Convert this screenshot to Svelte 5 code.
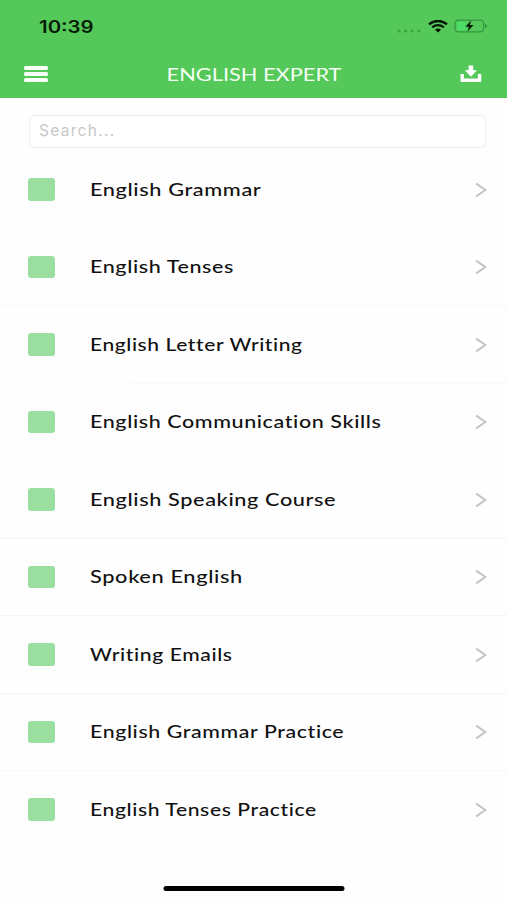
<script>
  const topics = [
    { title: 'English Grammar', stretch: 1.207, line: 'none' },
    { title: 'English Tenses', stretch: 1.195, line: 'soft' },
    { title: 'English Letter Writing', stretch: 1.167, line: 'inset' },
    { title: 'English Communication Skills', stretch: 1.194, line: 'none' },
    { title: 'English Speaking Course', stretch: 1.206, line: 'full' },
    { title: 'Spoken English', stretch: 1.212, line: 'full' },
    { title: 'Writing Emails', stretch: 1.175, line: 'full' },
    { title: 'English Grammar Practice', stretch: 1.186, line: 'soft' },
    { title: 'English Tenses Practice', stretch: 1.174, line: 'none' }
  ];

  let query = $state('');
  let visible = $derived(topics.filter((t) => t.title.toLowerCase().includes(query.toLowerCase())));
</script>

<div class="screen">
  <header>
    <div class="status">
      <span class="time">10:39</span>
      <div class="indicators">
        <svg class="dots" width="24" height="4" viewBox="0 0 24 4">
          <circle cx="2" cy="2" r="1.6" /><circle cx="8.6" cy="2" r="1.6" />
          <circle cx="15.2" cy="2" r="1.6" /><circle cx="21.8" cy="2" r="1.6" />
        </svg>
        <svg class="wifi" width="20" height="13" viewBox="0 0 20 13">
          <path d="M1 4.3Q10-2.4 19 4.3" stroke-width="2.4" />
          <path d="M4.2 7.3Q10 2.9 15.8 7.3" stroke-width="2.2" />
          <path d="M7 9.8Q10 7.4 13 9.8L10 12.6Z" class="solid" />
        </svg>
        <svg class="battery" width="34" height="14" viewBox="0 0 34 14">
          <rect x="1" y="1.2" width="28.6" height="11.6" rx="3.2" fill="none" stroke="#359640" stroke-width="1.2" />
          <rect x="2.8" y="2.8" width="10.5" height="8.4" rx="1.8" fill="#4bdc68" />
          <path d="M31 4.8Q33 5.4 33 7Q33 8.6 31 9.2Z" fill="#359640" />
          <path d="M17.2 1.4L11.2 7.8H14.8L13.6 12.6L19.6 6.1H16Z" fill="#06210a" />
        </svg>
      </div>
    </div>
    <nav>
      <button class="menu" aria-label="Menu">
        <span></span><span></span><span></span>
      </button>
      <h1>ENGLISH EXPERT</h1>
      <button class="download" aria-label="Download">
        <svg width="22" height="18" viewBox="0 0 22 18">
          <path d="M8.6 0.4H13.2V5.2H17L10.9 11.8L4.8 5.2H8.6Z" />
          <path d="M0.5 9H3.9V13.4H17.9V9H21.3V15.8Q21.3 17 20.1 17H1.7Q0.5 17 0.5 15.8Z" />
        </svg>
      </button>
    </nav>
  </header>

  <div class="search">
    <input type="text" placeholder="Search..." aria-label="Search" bind:value={query} />
  </div>

  <ul>
    {#each visible as topic}
      <li class={topic.line}>
        <span class="thumb"></span>
        <span class="title">
          <span class="label" style:transform="scaleX({topic.stretch})">{topic.title}</span>
        </span>
        <svg class="chevron" width="12" height="16" viewBox="0 0 12 16">
          <path d="M1.2 1.6L10.4 8L1.2 14.4" />
        </svg>
      </li>
    {/each}
  </ul>

  <div class="home-bar"></div>
</div>

<style>
  :global(body) {
    margin: 0;
    background: #fefefe;
  }

  .screen {
    box-sizing: border-box;
    width: 507px;
    height: 900px;
    display: flex;
    flex-direction: column;
    overflow: hidden;
    background: #fefefe;
    font-family: Lato, 'Liberation Sans', sans-serif;
    color: #111;
  }

  header {
    box-sizing: border-box;
    height: 98.4px;
    flex: none;
    background: #54c858;
  }

  .status {
    height: 50px;
    box-sizing: border-box;
    padding: 3px 19px 0 39px;
    display: flex;
    align-items: center;
    justify-content: space-between;
  }

  .time {
    font: 600 17px/20px Inter, sans-serif;
    color: #071c08;
    transform: scaleX(1.2);
    transform-origin: left;
  }

  .indicators {
    display: flex;
    align-items: center;
  }

  .dots { fill: #3da444; margin: 8px 7px 0 0; }
  .wifi { fill: none; stroke: #041506; margin: 0 6px 1px 0; }
  .wifi .solid { fill: #041506; stroke: none; }
  .battery { margin-bottom: 1px; }

  nav {
    height: 48px;
    padding: 0 25px 0 24px;
    display: grid;
    grid-template-columns: 24px 1fr 22px;
    align-items: center;
  }

  button {
    border: 0;
    padding: 0;
    background: none;
    cursor: pointer;
  }

  .menu {
    display: flex;
    flex-direction: column;
    gap: 2.8px;
  }

  .menu span {
    width: 24px;
    height: 3.4px;
    border-radius: 1.5px;
    background: #f8fff8;
  }

  h1 {
    margin: 0;
    font-size: 18px;
    line-height: 24px;
    font-weight: 400;
    text-align: center;
    color: #f4fff4;
    transform: scaleX(1.21);
  }

  .download svg {
    display: block;
    fill: #fff;
  }

  .search {
    padding: 16.4px 21px 0 29px;
    height: 36.5px;
    flex: none;
  }

  input {
    box-sizing: border-box;
    width: 100%;
    height: 33px;
    border: 1.5px solid #efefef;
    border-radius: 5px;
    padding: 0 9px 1px;
    background: #fff;
    font: 400 15.5px Inter, sans-serif;
    letter-spacing: 1.3px;
    outline: none;
  }

  input::placeholder { color: #c8c8c8; opacity: 1; }

  ul {
    list-style: none;
    margin: 0;
    padding: 0;
    flex: 1;
  }

  li {
    box-sizing: border-box;
    height: 77.5px;
    padding: 0 20px 0 28px;
    display: flex;
    align-items: center;
    border-bottom: 1px solid transparent;
  }

  li.full { border-bottom-color: #f4f4f4; }
  li.soft { border-bottom-color: #f9f9f9; }
  li.inset {
    border-image: linear-gradient(90deg, transparent 25%, #f9f9f9 26%) 1;
    border-width: 0 0 1px;
  }

  .thumb {
    width: 27px;
    height: 22.5px;
    border-radius: 3px;
    background: #9adf9f;
  }

  .title {
    flex: 1;
    margin: 0 0 1px 35px;
    line-height: 20px;
  }

  .label {
    display: inline-block;
    font-size: 18px;
    font-weight: 500;
    letter-spacing: 0.5px;
    white-space: nowrap;
    transform-origin: left;
  }

  .chevron {
    fill: none;
    stroke: #c3c3c3;
    stroke-width: 2;
  }

  .home-bar {
    width: 181px;
    height: 5.5px;
    flex: none;
    margin: 0 auto 9px;
    transform: translateX(0.5px);
    border-radius: 3px;
    background: #000;
  }
</style>
